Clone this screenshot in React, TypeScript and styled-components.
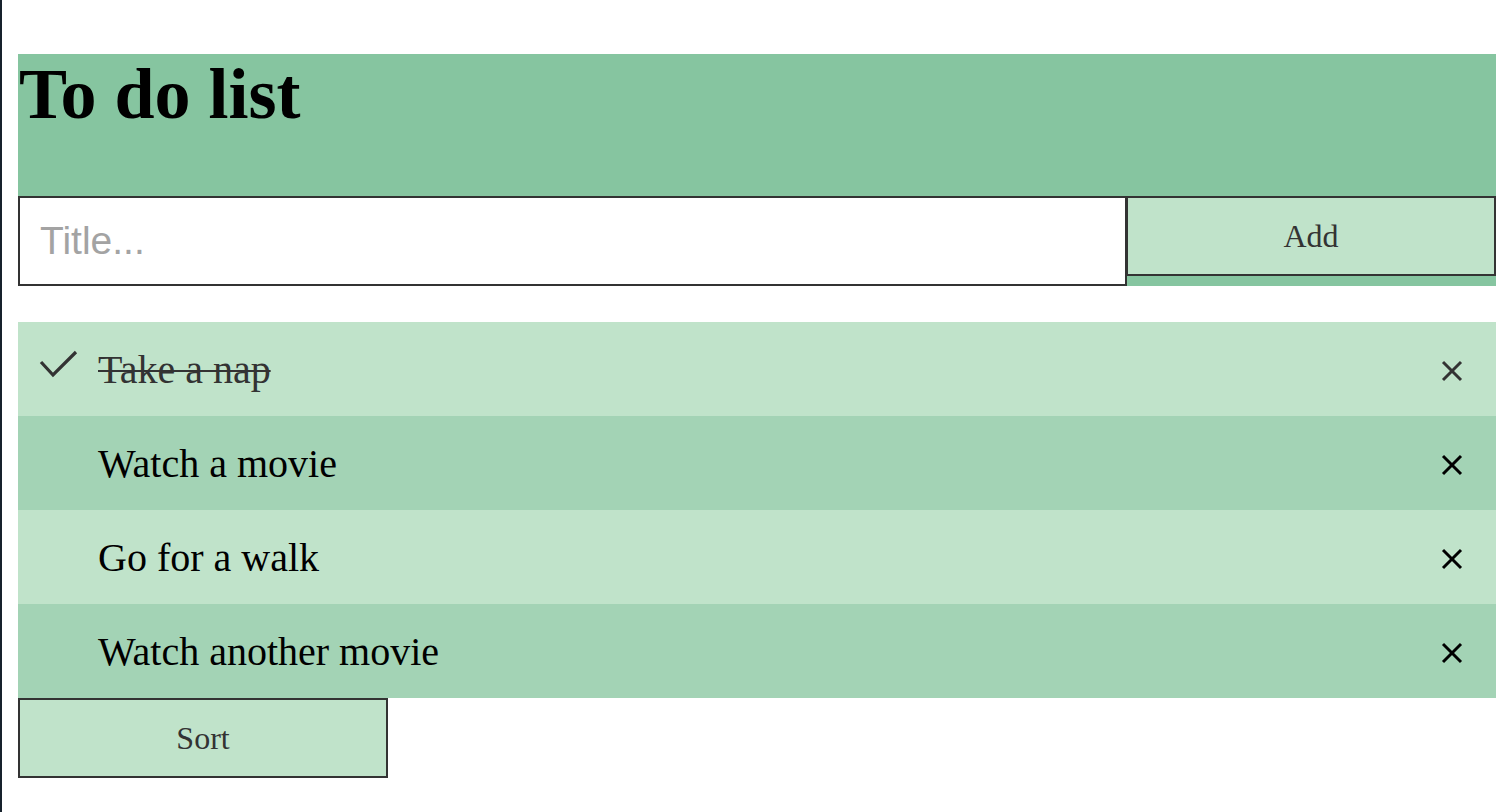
import React from "react";
import styled, { createGlobalStyle } from "styled-components";

const GlobalStyle = createGlobalStyle`
  html {
    border-left: 2px solid #17212c;
    background: #ffffff;
    min-height: 100vh;
    box-sizing: border-box;
  }
  body {
    margin: 0;
    font-family: "Liberation Serif", "Times New Roman", serif;
    color: #000;
  }
  * { box-sizing: border-box; }
`;

const Page = styled.div`
  padding: 54px 16px 0 16px;
`;

const Header = styled.header`
  background: #86c5a0;
  display: flex;
  flex-direction: column;
`;

const Title = styled.h1`
  margin: 0 0 62px 0;
  font-size: 72px;
  line-height: 80px;
  font-weight: 700;
  padding-left: 1px;
`;

const Form = styled.form`
  display: flex;
  align-items: flex-start;
`;

const TitleInput = styled.input`
  flex: 1;
  height: 90px;
  border: 2px solid #333;
  background: #fff;
  padding: 0 20px;
  font-family: "Liberation Sans", Arial, sans-serif;
  font-size: 39px;
  outline: none;
  &::placeholder { color: #a3a3a3; }
`;

const ActionButton = styled.button`
  width: 370px;
  height: 80px;
  border: 2px solid #333;
  background: #c0e3ca;
  color: #333;
  font-family: "Liberation Serif", "Times New Roman", serif;
  font-size: 32px;
  padding: 0;
  margin-left: -1px;
  cursor: pointer;
`;

const SortButton = styled(ActionButton)`
  margin-left: 0;
  display: block;
`;

const List = styled.ul`
  list-style: none;
  margin: 36px 0 0 0;
  padding: 0;
`;

const Row = styled.li<{ $alt: boolean; $done: boolean }>`
  height: 94px;
  display: flex;
  align-items: center;
  background: ${(p) => (p.$alt ? "#a3d3b5" : "#c0e3ca")};
  color: ${(p) => (p.$done ? "#333" : "#000")};
`;

const CheckCell = styled.span`
  width: 80px;
  height: 100%;
  display: flex;
  align-items: center;
  padding-left: 21px;
`;

const Label = styled.span<{ $done: boolean }>`
  flex: 1;
  font-size: 40px;
  text-decoration: ${(p) => (p.$done ? "line-through" : "none")};
  text-decoration-thickness: 2px;
`;

const RemoveCell = styled.span`
  width: 88px;
  display: flex;
  justify-content: center;
  align-items: center;
  margin-top: 3px;
`;

const Check = () => (
  <svg width="40" height="30" viewBox="0 0 40 30" style={{ marginTop: -10 }}>
    <polyline
      points="2,13 14,26 37,3"
      fill="none"
      stroke="#333"
      strokeWidth="3.2"
      strokeLinecap="butt"
      strokeLinejoin="miter"
    />
  </svg>
);

const Cross = ({ color }: { color: string }) => (
  <svg width="22" height="22" viewBox="0 0 22 22">
    <line x1="2" y1="2" x2="20" y2="20" stroke={color} strokeWidth="3" />
    <line x1="20" y1="2" x2="2" y2="20" stroke={color} strokeWidth="3" />
  </svg>
);

const items = [
  { title: "Take a nap", done: true },
  { title: "Watch a movie", done: false },
  { title: "Go for a walk", done: false },
  { title: "Watch another movie", done: false },
];

export default function App() {
  return (
    <>
      <GlobalStyle />
      <Page>
        <Header>
          <Title>To do list</Title>
          <Form onSubmit={(e) => e.preventDefault()}>
            <TitleInput placeholder="Title..." />
            <ActionButton type="submit">Add</ActionButton>
          </Form>
        </Header>
        <List>
          {items.map((it, i) => (
            <Row key={it.title} $alt={i % 2 === 1} $done={it.done}>
              <CheckCell>{it.done && <Check />}</CheckCell>
              <Label $done={it.done}>{it.title}</Label>
              <RemoveCell>
                <Cross color={it.done ? "#333" : "#000"} />
              </RemoveCell>
            </Row>
          ))}
        </List>
        <SortButton type="button">Sort</SortButton>
      </Page>
    </>
  );
}
